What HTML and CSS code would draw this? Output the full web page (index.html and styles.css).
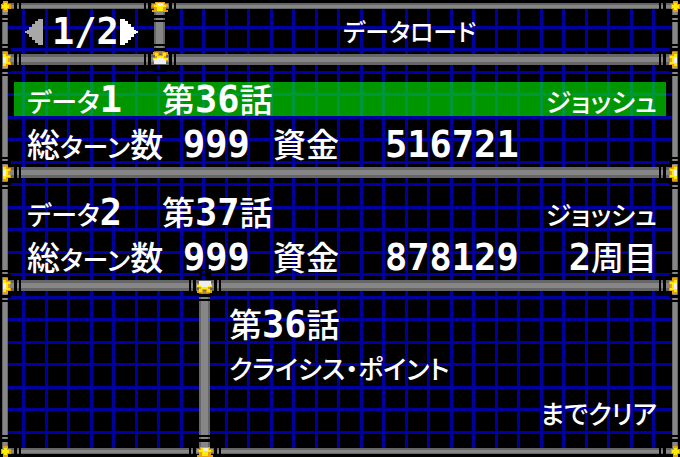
FILE: index.html
```html
<!DOCTYPE html>
<html lang="ja">
<head>
  <meta charset="UTF-8" />
  <meta name="viewport" content="width=device-width, initial-scale=1.0"/>
  <title>データロード</title>
  <link rel="stylesheet" href="styles.css">
</head>
<body>
  <!-- joint pieces shared by every bar end -->
  <svg class="defs" aria-hidden="true">
    <symbol id="cuts-h" viewBox="0 0 40 40">
      <path fill="#000" d="M4 14h2v12h-2zM8 14h3v12h-3zM29 14h3v12h-3zM34 14h2v12h-2z"/>
    </symbol>
    <symbol id="cuts-v" viewBox="0 0 40 40">
      <path fill="#000" d="M14 4h12v2h-12zM14 8h12v3h-12zM14 29h12v3h-12zM14 34h12v2h-12z"/>
    </symbol>
    <symbol id="corner" viewBox="0 0 40 40">
      <path fill="#e8a010" d="M18 15h5v3h3v5h-3v3h-5v-3h-2v-5h2z"/>
      <path fill="#ffec00" d="M19 17h3v2h2v3h-2v2h-3v-2h-2v-3h2z"/>
    </symbol>
    <symbol id="end" viewBox="0 0 40 40">
      <path fill="#e8a010" d="M15 16h10v2h3v3h-2v3h2v2h-16v-2h2v-3h-2v-3h3z"/>
      <path fill="#ffec00" d="M16 17h8v2h2v2h-3v4h-6v-4h-3v-2h2z"/>
      <path fill="#eee" d="M18 17h5v3h-5z"/>
    </symbol>
    <symbol id="tee" viewBox="0 0 40 40">
      <path fill="#e8a010" d="M13 12h6v3h3v-3h6v3h-2v3h2v3h-15v-3h2v-3h-2z"/>
      <path fill="#ffec00" d="M15 13h3v3h5v-3h3v3h-2v2h4v2h-15v-2h4v-2h-2z"/>
      <path fill="#eee" d="M17 18h6v1h3v5h-12v-5h3z"/>
    </symbol>
    <symbol id="edge" viewBox="0 0 40 40">
      <path fill="#e8a010" d="M18 12h5v3h3v3h-1v4h1v3h-3v3h-5z"/>
      <path fill="#ffec00" d="M18 14h3v2h4v2h-2v4h2v2h-4v2h-3z"/>
      <path fill="#eee" d="M18 17h3v6h-3z"/>
    </symbol>
  </svg>

  <main class="frame">
    <div class="bar thin">
      <svg class="joint left"><use href="#cuts-h"/><use href="#cuts-v"/><use href="#corner"/></svg>
      <svg class="joint right"><use href="#cuts-h"/><use href="#cuts-v"/><use href="#corner"/></svg>
    </div>

    <header class="panel header">
      <nav class="pager">
        <button type="button" aria-label="前のページ" disabled><svg viewBox="0 0 18 26"><path d="M18 0v26h-5v-2h-3v-3h-3v-3h-3v-3h-2v-1h-2v-2h2v-1h2v-3h3v-3h3v-3h3v-2z"/></svg></button>
        <span class="num">1/2</span>
        <button type="button" aria-label="次のページ"><svg viewBox="0 0 18 26"><path d="M0 0h5v2h3v3h3v3h3v3h2v1h2v2h-2v1h-2v3h-3v3h-3v3h-3v2h-5z"/></svg></button>
      </nav>
      <div class="post">
        <svg class="joint top"><use href="#cuts-h"/><use href="#cuts-v"/><use href="#end"/></svg>
        <svg class="joint bottom"><use href="#cuts-h"/><use href="#cuts-v"/><use href="#tee"/></svg>
      </div>
      <h1 class="kana">データロード</h1>
    </header>

    <div class="bar">
      <svg class="joint left"><use href="#cuts-h"/><use href="#cuts-v"/><use href="#edge"/></svg>
      <svg class="joint right flip"><use href="#cuts-h"/><use href="#cuts-v"/><use href="#edge"/></svg>
    </div>

    <section class="panel slot">
      <div class="row name selected">
        <span><span class="kana">データ</span><span class="num">1</span></span>
        <span>第<span class="num">36</span>話</span>
        <span class="kana">ジョッシュ</span>
      </div>
      <div class="row stats">
        <span>総<span class="kana">ターン</span>数</span>
        <span class="num">999</span>
        <span>資金</span>
        <span class="num">516721</span>
      </div>
    </section>

    <div class="bar">
      <svg class="joint left"><use href="#cuts-h"/><use href="#cuts-v"/><use href="#edge"/></svg>
      <svg class="joint right flip"><use href="#cuts-h"/><use href="#cuts-v"/><use href="#edge"/></svg>
    </div>

    <section class="panel slot">
      <div class="row name">
        <span><span class="kana">データ</span><span class="num">2</span></span>
        <span>第<span class="num">37</span>話</span>
        <span class="kana">ジョッシュ</span>
      </div>
      <div class="row stats">
        <span>総<span class="kana">ターン</span>数</span>
        <span class="num">999</span>
        <span>資金</span>
        <span class="num">878129</span>
        <span><span class="num">2</span>周目</span>
      </div>
    </section>

    <div class="bar">
      <svg class="joint left"><use href="#cuts-h"/><use href="#cuts-v"/><use href="#edge"/></svg>
      <svg class="joint right flip"><use href="#cuts-h"/><use href="#cuts-v"/><use href="#edge"/></svg>
    </div>

    <section class="panel info">
      <div></div>
      <div class="post">
        <svg class="joint top turn"><use href="#cuts-h"/><use href="#cuts-v"/><use href="#tee"/></svg>
        <svg class="joint bottom"><use href="#cuts-h"/><use href="#cuts-v"/><use href="#end"/></svg>
      </div>
      <div class="chapter">
        <p>第<span class="num">36</span>話</p>
        <p class="kana">クライシス・ポイント</p>
        <p class="kana clear">までクリア</p>
      </div>
    </section>

    <div class="bar thin">
      <svg class="joint left"><use href="#cuts-h"/><use href="#cuts-v"/><use href="#corner"/></svg>
      <svg class="joint right"><use href="#cuts-h"/><use href="#cuts-v"/><use href="#corner"/></svg>
    </div>
  </main>
</body>
</html>
```
FILE: styles.css
```css
:root {
  --line: #0000a0;
  --edge: #666;
  --metal: #868686;
  --green: rgba(0, 250, 0, 0.6);
}
* { box-sizing: border-box; }
body {
  margin: 0; padding: 3px 2px;
  background-color: #000; color: #fff;
  font-family: "Noto Sans CJK JP", sans-serif;
  font-size: 33px; font-weight: 500; line-height: 32px;
}
h1, p { margin: 0; font-size: inherit; font-weight: inherit; }
.defs { position: absolute; width: 0; height: 0; }

.frame {
  display: flex; flex-direction: column;
  min-height: calc(100vh - 6px);
  background:
    linear-gradient(90deg, var(--edge) 1px, var(--metal) 1px 5px, var(--edge) 5px) left / 6px 100% no-repeat,
    linear-gradient(90deg, var(--edge) 1px, var(--metal) 1px 5px, var(--edge) 5px) right / 6px 100% no-repeat,
    linear-gradient(90deg, var(--line) 3px, transparent 3px 23px, var(--line) 23px 26px, transparent 26px) 20px 0 / 45px 45px,
    linear-gradient(var(--line) 3px, transparent 3px 22px, var(--line) 22px 25px, transparent 25px) 0 23px / 45px 45px;
}

/* metal bars */
.bar {
  position: relative; flex: none; height: 11px;
  margin: 0 6px;
  background: linear-gradient(var(--edge) 3px, var(--metal) 3px 8px, var(--edge) 8px);
}
.bar.thin {
  height: 6px;
  background: linear-gradient(var(--edge) 2px, var(--metal) 2px 5px, var(--edge) 5px);
}
.post {
  position: relative;
  background: linear-gradient(90deg, var(--edge) 2px, var(--metal) 2px 9px, var(--edge) 9px);
}
.joint { position: absolute; width: 40px; height: 40px; z-index: 1; }
.joint.left { left: -23px; top: calc(50% - 20px); }
.joint.right { right: -23px; top: calc(50% - 20px); }
.joint.top { left: calc(50% - 20px); top: -23px; }
.joint.bottom { left: calc(50% - 20px); bottom: -23px; }
.header .joint.bottom { bottom: -26px; }
.joint.top.turn { top: -26px; }
.joint.flip, .joint.turn { transform: rotate(180deg); }

/* panels */
.panel { margin: 0 6px; }
.header {
  display: grid; grid-template-columns: 146px 11px 1fr;
  height: 45px;
}
.header h1 { padding: 6px 0 0 178px; font-size: 24px; }
.pager {
  display: flex; align-items: center; gap: 9px;
  padding-left: 17px;
}
.pager .num + button { margin-left: -8px; }
.pager button {
  display: block; padding: 0; border: 0;
  background: none; color: #fff;
}
.pager button:disabled { color: #a8a8a8; }
.pager svg { display: block; width: 18px; height: 26px; fill: currentColor; }

.slot {
  display: flex; flex-direction: column; gap: 11px;
  padding: 17px 6px 6px;
}
.row {
  display: grid; align-items: baseline;
  height: 34px; padding: 0 9px 0 13px;
  white-space: nowrap;
}
.name { grid-template-columns: 135px 1fr auto; }
.stats { grid-template-columns: 156px 90px 112px 1fr auto; }
.selected { background-color: var(--green); }

.info { display: grid; grid-template-columns: 191px 11px 1fr; flex: 1; }
.chapter {
  display: flex; flex-direction: column; gap: 11px;
  padding: 16px 15px 17px 19px;
}
.chapter p { height: 34px; }
.clear { text-align: right; }

/* text */
.num {
  font-family: "DejaVu Sans Mono", monospace;
  font-size: 37px; font-weight: 700; line-height: 32px;
}
.kana { font-size: 26px; font-feature-settings: "palt"; }
```
